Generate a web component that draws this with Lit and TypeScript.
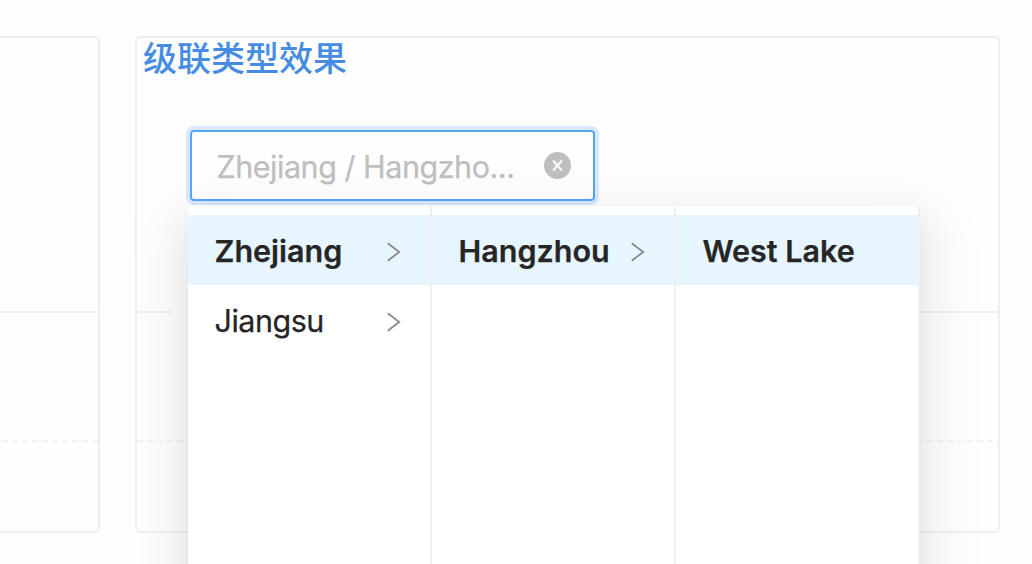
import { LitElement, html, css, svg } from "lit";
import { customElement, property } from "lit/decorators.js";

interface Option {
  label: string;
  active?: boolean;
  expandable?: boolean;
}

const COLUMNS: Option[][] = [
  [
    { label: "Zhejiang", active: true, expandable: true },
    { label: "Jiangsu", expandable: true },
  ],
  [{ label: "Hangzhou", active: true, expandable: true }],
  [{ label: "West Lake", active: true }],
];

@customElement("cascader-menu")
class CascaderMenu extends LitElement {
  @property({ attribute: false }) columns: Option[][] = [];

  static styles = css`
    :host {
      display: flex;
      height: 400px;
      background: #fff;
      border-radius: 4px;
      box-shadow: 0 6.6px 13px -8.8px rgba(0, 0, 0, 0.12), 0 13px 35px 0 rgba(0, 0, 0, 0.08),
        0 20px 61px 17.6px rgba(0, 0, 0, 0.05);
    }
    .column {
      box-sizing: border-box;
      width: 244px;
      padding: 9px 0;
      border-right: 2px solid #efefef;
    }
    .item {
      box-sizing: border-box;
      height: 70px;
      padding: 0 29px 0 26.5px;
      display: flex;
      align-items: center;
      justify-content: space-between;
      font-size: 30.5px;
      line-height: 44px;
      letter-spacing: -0.5px;
      color: #262626;
      white-space: nowrap;
    }
    .label {
      margin-top: 1px;
      -webkit-text-stroke: 0.25px currentColor;
    }
    .active {
      background: #e7f5fe;
      font-weight: 600;
      letter-spacing: 0;
    }
    .arrow {
      margin-top: 4px;
      flex: none;
    }
  `;

  render() {
    return this.columns.map(
      (column) => html`<div class="column">
        ${column.map(
          (o) => html`<div class="item ${o.active ? "active" : ""}">
            <span class="label">${o.label}</span>
            ${o.expandable
              ? html`<svg class="arrow" width="16" height="20" viewBox="0 0 16 20">
                  ${svg`<path d="M2.8 1.2L14.2 10L2.8 18.8" fill="none" stroke="#888b8d" stroke-width="1.8" />`}
                </svg>`
              : ""}
          </div>`
        )}
      </div>`
    );
  }
}

@customElement("app-root")
class AppRoot extends LitElement {
  static styles = css`
    :host {
      display: block;
      box-sizing: border-box;
      width: 1032px;
      height: 564px;
      overflow: hidden;
      background: #fefefe;
      font-family: Inter, "Noto Sans CJK SC", sans-serif;
    }
    .page {
      display: flex;
      gap: 35px;
      padding-top: 36px;
    }
    .card {
      box-sizing: border-box;
      height: 497px;
      border: 2px solid #efefef;
      border-radius: 5px;
      display: grid;
      grid-template-rows: 273px 129px 1fr;
    }
    .left {
      width: 100px;
      border-left: 0;
      border-radius: 0 5px 5px 0;
    }
    .right {
      width: 865px;
      position: relative;
    }
    .line {
      height: 2px;
      background: #efefef;
    }
    .short {
      background: linear-gradient(90deg, #efefef 35px, transparent 35px 60px, #efefef 60px);
    }
    .dash {
      height: 2px;
      background: repeating-linear-gradient(90deg, #f3f3f3 0 6px, transparent 6px 10px);
    }
    .left .dash {
      margin-left: 2px;
    }
    h1 {
      margin: 0;
      padding-left: 6px;
      font: 500 34px/38px "Noto Sans CJK SC", sans-serif;
      color: #468ce2;
      white-space: nowrap;
    }
    .select {
      box-sizing: border-box;
      width: 405px;
      height: 71px;
      margin: 54px 0 0 53px;
      padding: 0 22px 0 24.5px;
      display: flex;
      align-items: center;
      justify-content: space-between;
      border: 2px solid #55a7fa;
      border-radius: 4px;
      box-shadow: 0 0 0 4px #dae8fd;
    }
    .value {
      margin-top: 2px;
      font-size: 30.5px;
      line-height: 44px;
      letter-spacing: -0.47px;
      color: #bfbfbf;
      -webkit-text-stroke: 0.25px currentColor;
      white-space: nowrap;
    }
    .clear {
      flex: none;
    }
    .menu {
      position: absolute;
      left: 51px;
      top: 168px;
    }
  `;

  render() {
    return html`<div class="page">
      <section class="card left">
        <div></div>
        <div><div class="line"></div></div>
        <div><div class="dash"></div></div>
      </section>
      <section class="card right">
        <div>
          <h1>级联类型效果</h1>
          <div class="select">
            <span class="value">Zhejiang / Hangzho...</span>
            <svg class="clear" width="27" height="27" viewBox="0 0 27 27">
              <circle cx="13.5" cy="13.5" r="13.5" fill="#bfbfbf" />
              <path d="M9 8.5L18 18.7M18 8.5L9 18.7" stroke="#fff" stroke-width="1.9" />
            </svg>
          </div>
        </div>
        <div><div class="line short"></div></div>
        <div><div class="dash"></div></div>
        <cascader-menu class="menu" .columns=${COLUMNS}></cascader-menu>
      </section>
    </div>`;
  }
}
